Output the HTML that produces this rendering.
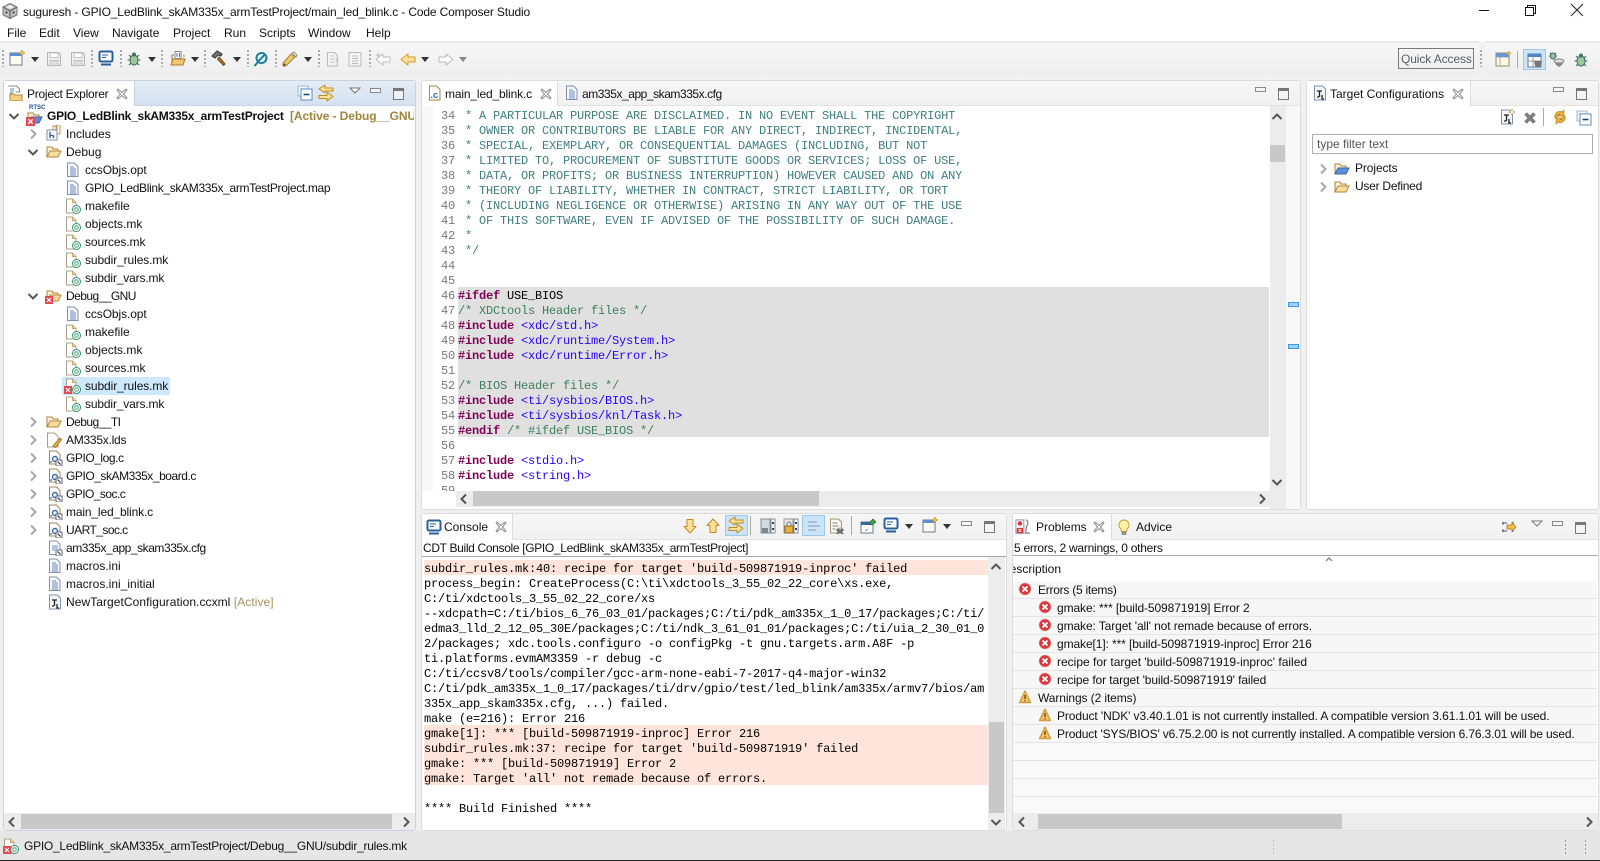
<!DOCTYPE html>
<html><head><meta charset="utf-8"><style>
html,body{margin:0;padding:0;width:1600px;height:861px;overflow:hidden;background:#f0f0f0}
#r{position:relative;width:1600px;height:861px;overflow:hidden;font:12px "Liberation Sans",sans-serif;color:#111}
.a,.t,.i,.m{position:absolute}
.t{white-space:pre;line-height:16px;height:16px}
.i{width:16px;height:16px;overflow:visible}
.m{white-space:pre;font:12px/15px "Liberation Mono",monospace;letter-spacing:-.2px}
.p{position:absolute;background:#fff;border:1px solid #dcdcdc;border-radius:3px;box-sizing:border-box}
.g{position:absolute;width:2px;height:17px;top:50px;background:repeating-linear-gradient(#aaa 0 2px,transparent 2px 4px)}
.mn{position:absolute;width:9px;height:3px;border:1px solid #8a8a8a;background:#fff}
.mx{position:absolute;width:9px;height:8px;border:1px solid #777;border-top-width:3px;background:#fff;box-sizing:content-box}
.d{position:absolute;width:0;height:0;border:4px solid transparent;border-top:5px solid #333;border-bottom:0}
.c{color:#3f7f7f}.k{color:#7f0055;font-weight:bold}.s{color:#2a00ff}.gc{color:#3f7f5f}
.ln{color:#787878;text-align:right;width:24px}
.ht{position:absolute;background:#ececec}
.th{position:absolute;background:#c8c8c8}
.sep{position:absolute;width:1px;background:#aaa}
.r{position:absolute;left:1013px;width:584px;height:17px;background:#f7f7f7;border-bottom:1px solid #e4e4e4}
.q0{letter-spacing:-.1px}.q1{letter-spacing:-.15px}.q2{letter-spacing:-.25px}.q3{letter-spacing:-.33px}.q4{letter-spacing:-.45px}.q5{letter-spacing:-.55px}
</style></head><body><div id="r">
<svg width="0" height="0" style="position:absolute"><defs>
<symbol id="x" viewBox="0 0 12 12"><path d="M2 1l4 3.500L10 1l1 1-3.500 4L11 10l-1 1-4-3.500L2 11l-1-1 3.500-4L1 2z" fill="#fff" stroke="#8c8c8c"/></symbol>
<symbol id="cr" viewBox="0 0 12 12"><path d="M4 1.500L8.500 6 4 10.500" fill="none" stroke="#a8a8a8" stroke-width="2"/></symbol>
<symbol id="cd" viewBox="0 0 12 12"><path d="M1.500 4L6 8.500 10.500 4" fill="none" stroke="#555" stroke-width="2"/></symbol>
<symbol id="tri" viewBox="0 0 12 7"><path d="M1 1h10L6 6z" fill="#fff" stroke="#777"/></symbol>
<symbol id="fo" viewBox="0 0 16 16"><path d="M1 13V3h5l1 2h5v2" fill="#fdf3d6" stroke="#a9813f"/><path d="M1 13l3-6h11l-3 6z" fill="#f7dca0" stroke="#b8843a"/></symbol>
<symbol id="fb" viewBox="0 0 16 16"><path d="M1 13V3h5l1 2h5v2" fill="#fdf3d6" stroke="#a9813f"/><path d="M1 13l3-6h11l-3 6z" fill="#5b8fd8" stroke="#3a64a8"/></symbol>
<symbol id="do" viewBox="0 0 16 16"><path d="M2.500 1h7l3.500 3.500v10h-10.500z" fill="#f6f8fc" stroke="#8291ab"/><path d="M5 5h4M5 7h6M5 9h6M5 11h6M5 13h6" stroke="#6a8ac4"/></symbol>
<symbol id="inc" viewBox="0 0 16 16"><path d="M7 1h4v9H7zM10 0h4v9h-4z" fill="#fdf8e8" stroke="#b49a60"/><rect x="1" y="5" width="10" height="10" fill="#f6f8fc" stroke="#8291ab"/><path d="M4 7v6M4 10.500h2.500a1 1 0 0 1 1 1V13" fill="none" stroke="#2f5d96" stroke-width="1.300"/></symbol>
<symbol id="mk" viewBox="0 0 16 16"><path d="M1.500 1h6l3.500 3.500V15h-9.500z" fill="#fff" stroke="#a8a08a"/><path d="M7.500 1v3.500H11" fill="#f0d890" stroke="#c8a860"/><circle cx="11.500" cy="11.500" r="4" fill="#fff" stroke="#2f9568"/><circle cx="11.500" cy="11.500" r="1.800" fill="none" stroke="#3fa878"/></symbol>
<symbol id="cf" viewBox="0 0 16 16"><path d="M2.500 1h7l3.500 3.500V14H2.500z" fill="#fff" stroke="#a08a50"/><circle cx="8" cy="9" r="2.500" fill="none" stroke="#3a6aa8" stroke-width="1.400"/><circle cx="4" cy="12" r=".9" fill="#3a6aa8"/><rect x="9" y="10" width="6" height="6" fill="#fff" stroke="#667"/><path d="M10.500 11.500l3 3" stroke="#335" stroke-width="1.200"/></symbol>
<symbol id="cc" viewBox="0 0 16 16"><path d="M2.500 1h7l3.500 3.500V15H2.500z" fill="#fff" stroke="#a08a50"/><text x="3.500" y="13" font-size="9" font-family="Liberation Sans" font-weight="bold" fill="#36a">.c</text></symbol>
<symbol id="cg" viewBox="0 0 16 16"><path d="M2.500 1h7l3.500 3.500v10h-10.500z" fill="#fff" stroke="#8291ab"/><path d="M5 6h6M5 8h6M5 10h3" stroke="#6a8ac4"/><rect x="9" y="10" width="6" height="6" fill="#fff" stroke="#667"/><path d="M10.500 11.500l3 3" stroke="#335" stroke-width="1.200"/></symbol>
<symbol id="ld" viewBox="0 0 16 16"><path d="M1.500 1h7l3.500 3.500V15H1.500z" fill="#fff" stroke="#a8a08a"/><path d="M7 14l7-8 1.500 1.500-6 8z" fill="#e8b840" stroke="#a87820"/></symbol>
<symbol id="tc" viewBox="0 0 16 16"><path d="M2.500 1h8l3 3v11h-11z" fill="#f4f6fa" stroke="#8291ab"/><path d="M5 6h5M7.500 6v6M5 12h2M10 10v4h2" stroke="#222" stroke-width="1.300" fill="none"/></symbol>
<symbol id="er" viewBox="0 0 16 16"><circle cx="8" cy="8" r="6" fill="#d5383f"/><circle cx="8" cy="8" r="6" fill="none" stroke="#f2b0a8" stroke-width=".6"/><path d="M5.500 5.500l5 5M10.500 5.500l-5 5" stroke="#fff" stroke-width="1.800"/></symbol>
<symbol id="wa" viewBox="0 0 16 16"><path d="M8 2l5.500 11.500h-11z" fill="#f3c36a" stroke="#d59a3a" stroke-width="1.400" stroke-linejoin="round"/><path d="M8 6v4M8 11.200v1.200" stroke="#6a4a10" stroke-width="1.400"/></symbol>
<symbol id="xm" viewBox="0 0 8 8"><rect width="8" height="8" fill="#de4a50"/><path d="M2 2l4 4M6 2l-4 4" stroke="#fff" stroke-width="1.200"/></symbol>
<symbol id="mo" viewBox="0 0 16 16"><rect x="1.500" y="1.500" width="13" height="10" rx="1.500" fill="#fff" stroke="#2a5f9e" stroke-width="2"/><path d="M4 5h6M4 7.500h4" stroke="#2a5f9e"/><path d="M3 14.500h10" stroke="#2a5f9e" stroke-width="2"/></symbol>
<symbol id="nw" viewBox="0 0 16 16"><rect x="1" y="3" width="12" height="12" fill="#fdfaf0" stroke="#6a7a98"/><path d="M1 3h12v3H1z" fill="#5b8fd0"/><path d="M13 0l1 2 2 1-2 1-1 2-1-2-2-1 2-1z" fill="#f5d04a" stroke="#b89020" stroke-width=".6"/></symbol>
<symbol id="sv" viewBox="0 0 16 16"><path d="M1.500 1.500h11l2 2v11h-13z" fill="#f2f2f2" stroke="#b4b4b4"/><rect x="4" y="2" width="8" height="4.500" fill="#fff" stroke="#c0c0c0"/><rect x="4" y="9.500" width="8" height="5" fill="#ddd" stroke="#c0c0c0"/></symbol>
<symbol id="bg" viewBox="0 0 16 16"><ellipse cx="8" cy="9" rx="4" ry="5" fill="#9cc79a" stroke="#3f6a60"/><circle cx="8" cy="3.500" r="2" fill="#4a7068"/><path d="M3 4l2 2M13 4l-2 2M1.500 9H4M14.500 9H12M3 14l2-2M13 14l-2-2" stroke="#3f6a60" stroke-width="1.100"/></symbol>
<symbol id="op" viewBox="0 0 16 16"><path d="M2 14V5h2M14 5v2" fill="none" stroke="#a9813f"/><path d="M1 15l2-6h12l-2 6z" fill="#f7c66e" stroke="#a87a30"/><path d="M5 1.500h6v7h-6z" fill="#fff" stroke="#888"/><path d="M7.500 3.500c-1 0 0 1.500-1 1.500 1 0 0 1.500 1 1.500M9 3.500c1 0 0 1.500 1 1.500-1 0 0 1.500-1 1.500" fill="none" stroke="#1d5fa8"/></symbol>
<symbol id="hm" viewBox="0 0 16 16"><path d="M8 7l6 7-1.500 1.500L6.500 9z" fill="#b07838" stroke="#704818"/><path d="M1 6l5-5 5 3-1 2-3-1-3 3z" fill="#777" stroke="#333"/></symbol>
<symbol id="se" viewBox="0 0 16 16"><circle cx="8.500" cy="7" r="5" fill="#f4fbfb" stroke="#1c7f9c" stroke-width="2"/><path d="M5.500 10l6-6M5 11l-3.500 4" stroke="#1c7f9c" stroke-width="2"/></symbol>
<symbol id="pn" viewBox="0 0 16 16"><path d="M4 15l-3 0 0-3 8-9 4 3z" fill="#eac66a" stroke="#a98636"/><path d="M1 15l3-1-2-2z" fill="#444"/><path d="M10 2l2-1 3 3-1 2z" fill="#eee" stroke="#998"/></symbol>
<symbol id="pd" viewBox="0 0 16 16"><path d="M2.500 1.500h7l3 3V15h-10z" fill="#f4f4f4" stroke="#bbb"/><path d="M5 5h4M5 8h5M5 11h5" stroke="#c4c4c4"/><path d="M11 6l3 3-3 3z" fill="#ccc"/></symbol>
<symbol id="pl" viewBox="0 0 16 16"><rect x="2" y="1.500" width="12" height="13.500" fill="#f4f4f4" stroke="#bbb"/><path d="M5 5h6M5 7.500h6M5 10h6M5 12.500h6" stroke="#bbb"/></symbol>
<symbol id="al" viewBox="0 0 16 16"><path d="M8 3v3h7v5H8v3L1 8.500z" fill="#fbe29a" stroke="#d49a28" stroke-linejoin="round"/></symbol>
<symbol id="ar" viewBox="0 0 16 16"><path d="M8 3v3H1v5h7v3l7-5.500z" fill="#fff" stroke="#b8b8b8" stroke-linejoin="round"/></symbol>
<symbol id="ag" viewBox="0 0 16 16"><path d="M8 3v3h7v5H8v3L1 8.500z" fill="#fff" stroke="#bbb" stroke-linejoin="round"/><path d="M3 1l1 2 2 1-2 1-1 2-1-2-2-1 2-1z" fill="#ccc"/></symbol>
<symbol id="ln" viewBox="0 0 18 18"><path d="M8 1l-6 4 6 4V7h8V4H8z" fill="#fbe29a" stroke="#c48a20" stroke-linejoin="round"/><path d="M10 8l6 4.500-6 4.500v-2.500H2v-3h8z" fill="#fbe29a" stroke="#c48a20" stroke-linejoin="round"/></symbol>
<symbol id="cl" viewBox="0 0 16 16"><rect x="1" y="1" width="10" height="10" fill="#eef4fa" stroke="#9cb8d4"/><rect x="4" y="4" width="11" height="11" fill="#fff" stroke="#5b8cc0"/><path d="M6.500 9.500h6" stroke="#17476e" stroke-width="1.600"/></symbol>
<symbol id="pe" viewBox="0 0 16 16"><path d="M1.500 1h8l3 3v3h-4" fill="#fdfdfd" stroke="#888"/><path d="M3 4h4M3 6h4M3 8h3" stroke="#6a8ac4"/><path d="M3 16V9h4l1 1h7v6z" fill="#f5cd7e" stroke="#b08a40"/></symbol>
<symbol id="pb" viewBox="0 0 16 16"><rect x="1" y="2" width="13" height="13" fill="#fdf9e8" stroke="#9a8a60"/><path d="M1 6h13M5 6v9" stroke="#aaa"/><path d="M1 2h13v4H1z" fill="#6b98d0"/><path d="M14 0l.8 1.500 1.700.8-1.700.8-.8 1.500-.8-1.500-1.700-.8 1.700-.8z" fill="#f3cc45" stroke="#a88a20" stroke-width=".5"/></symbol>
<symbol id="pv" viewBox="0 0 16 16"><rect x="1" y="2" width="13" height="13" fill="#fff" stroke="#6a7a98"/><path d="M1 2h13v3H1z" fill="#4d85c5"/><path d="M1 9h13M6 5v10" stroke="#999"/><path d="M7 9h8l-1 5-3 2-3-2z" fill="#777"/></symbol>
<symbol id="db" viewBox="0 0 16 16"><path d="M5 8h10l-2 5-3 2-3-2z" fill="#888"/><ellipse cx="10" cy="9" rx="5" ry="2" fill="#ddd" stroke="#888"/><ellipse cx="4" cy="4" rx="2.500" ry="3" fill="#9cc79a" stroke="#3f6a60"/><path d="M1 1l1.500 1.500M7 1L5.500 2.500M0 4h1.500M8 4H6.500" stroke="#3f6a60"/></symbol>
<symbol id="ty" viewBox="0 0 16 16"><path d="M2.500 1h8l3 3v11h-11z" fill="#f4f6fa" stroke="#8291ab"/><path d="M5 6h5M7.500 6v6M5 12h2M10 10v4h2" stroke="#222" stroke-width="1.300" fill="none"/><path d="M13 0l1 2 2 1-2 1-1 2-1-2-2-1 2-1z" fill="#fff" stroke="#bba060" stroke-width=".7"/></symbol>
<symbol id="xx" viewBox="0 0 16 16"><path d="M3.500 3.500l9 9M12.500 3.500l-9 9" stroke="#7d7d7d" stroke-width="3.600"/></symbol>
<symbol id="sy" viewBox="0 0 16 16"><path d="M3 9a5 5 0 0 1 7-6l2-2v6H6l2-2a3 3 0 0 0-3 3z" fill="#eab23a" stroke="#b8801a" stroke-width=".7"/><path d="M13 7a5 5 0 0 1-7 6l-2 2V9h6l-2 2a3 3 0 0 0 3-3z" fill="#eab23a" stroke="#b8801a" stroke-width=".7"/></symbol>
<symbol id="dd" viewBox="0 0 16 16"><path d="M5 1.500h6v7h3l-6 6.500L2 8.500h3z" fill="#fbe29a" stroke="#c48a20" stroke-linejoin="round"/></symbol>
<symbol id="uu" viewBox="0 0 16 16"><path d="M5 14.500h6v-7h3L8 1 2 7.500h3z" fill="#fbe29a" stroke="#c48a20" stroke-linejoin="round"/></symbol>
<symbol id="sl" viewBox="0 0 16 16"><rect x="1" y="1" width="9" height="14" fill="#d4d9e0" stroke="#8a8a8a"/><path d="M11 1h4v14h-4z" fill="#fff" stroke="#7a8aa0"/><rect x="2" y="10" width="6" height="5" fill="#7d8590"/><path d="M13 4v2M13 10v2" stroke="#345" stroke-width="2"/></symbol>
<symbol id="lk" viewBox="0 0 16 16"><rect x="1" y="1" width="9" height="14" fill="#e6e8ec" stroke="#9a9a9a"/><path d="M11 1h4v14h-4z" fill="#fff" stroke="#7a8aa0"/><rect x="2" y="8" width="8" height="7" fill="#eab23a" stroke="#8a6a20"/><path d="M4 8V6a2 2 0 0 1 4 0v2" fill="none" stroke="#777"/><path d="M13 4v2M13 10v2" stroke="#345" stroke-width="2"/></symbol>
<symbol id="wr" viewBox="0 0 16 16"><path d="M2 4h9M2 8h12M2 12h8" stroke="#8a9ab0"/></symbol>
<symbol id="cx" viewBox="0 0 16 16"><path d="M1.500 1h8l3 3v6h-2l-2 5H1.500z" fill="#f8f6ee" stroke="#a59a70"/><path d="M3.500 5h5M3.500 8h6M3.500 11h3" stroke="#7a8aa0"/><path d="M9 10l2 2 2-2 2 2-2 2 2 2h-2.500L11 15l-1.500 1H7l2-2-2-2z" fill="#6a6a6a"/></symbol>
<symbol id="ps" viewBox="0 0 16 16"><rect x="1" y="4" width="12" height="11" fill="#fff" stroke="#6a7a98"/><path d="M1 4h12v3H1z" fill="#2f6ca8"/><path d="M9 5l4-4 3 3-4 3z" fill="#3fa04a" stroke="#1f6a2a" stroke-width=".7"/><path d="M5 13l3-2" stroke="#888"/></symbol>
<symbol id="pr" viewBox="0 0 18 18"><rect x="1" y="1" width="9" height="15" fill="#f5f5fa" stroke="#889"/><circle cx="5.500" cy="5" r="2.500" fill="#d33"/><rect x="2" y="10" width="7" height="6" fill="#d33"/><path d="M4 11.500l3 3M7 11.500l-3 3" stroke="#fff"/><path d="M12 1c3 0 3 6 1 7l-1 8h5" fill="none" stroke="#8a8a96" stroke-width="1.500"/></symbol>
<symbol id="ad" viewBox="0 0 16 16"><path d="M8 1a5 5 0 0 0-3 9l.5 2.500h5L11 10a5 5 0 0 0-3-9z" fill="#fdf0a8" stroke="#c8a030"/><rect x="6" y="13" width="4" height="2.500" fill="#99a" stroke="#667" stroke-width=".5"/></symbol>
<symbol id="ss" viewBox="0 0 16 16"><path d="M3 3v3M3 10v3M13 3v3M13 10v3M2 4h5M2 12h5" stroke="#557" /><path d="M7 6h5V3.500L16 8l-4 4.500V10H7z" fill="#f1c24a" stroke="#a87820" stroke-width=".8"/></symbol>
<symbol id="cb" viewBox="0 0 16 16"><path d="M8 .5l7 3.500v8l-7 3.500L1 12V4z" fill="#bdbdbd" stroke="#777"/><path d="M8 8L1 4M8 8l7-4M8 8v7.500" stroke="#555"/><path d="M4 4l4-2 4 2-4 2z" fill="#eee"/><circle cx="4.500" cy="9.500" r="1" fill="#333"/><circle cx="11.500" cy="9.500" r="1" fill="#333"/></symbol>
</defs></svg>

<!-- title + menu -->
<div class="a" style="left:0;top:0;width:1600px;height:42px;background:#fff"></div>
<svg class="i" style="left:2px;top:3px"><use href="#cb"/></svg>
<span class="t q1" style="left:23px;top:4px">suguresh - GPIO_LedBlink_skAM335x_armTestProject/main_led_blink.c - Code Composer Studio</span>
<div class="a" style="left:1479px;top:10px;width:10px;height:1px;background:#111"></div>
<div class="a" style="left:1527px;top:5px;width:7px;height:7px;border:1px solid #111;background:#fff"></div>
<div class="a" style="left:1525px;top:7px;width:7px;height:7px;border:1px solid #111;background:#fff"></div>
<svg class="i" style="left:1569px;top:2px"><path d="M2 2l12 12M14 2L2 14" stroke="#222" stroke-width="1"/></svg>
<span class="t" style="left:7px;top:25px">File</span><span class="t" style="left:39px;top:25px">Edit</span><span class="t" style="left:73px;top:25px">View</span><span class="t" style="left:112px;top:25px">Navigate</span><span class="t" style="left:173px;top:25px">Project</span><span class="t" style="left:224px;top:25px">Run</span><span class="t" style="left:259px;top:25px">Scripts</span><span class="t" style="left:308px;top:25px">Window</span><span class="t" style="left:366px;top:25px">Help</span>

<!-- toolbar -->
<div class="a" style="left:0;top:41px;width:1479px;height:34px;background:linear-gradient(#f7f7f7,#eeeeee);border-top:2px solid #ebebeb;box-sizing:border-box"></div>
<div class="a" style="left:1485px;top:41px;width:115px;height:34px;background:linear-gradient(#f7f7f7,#eeeeee);border-top:2px solid #ebebeb;box-sizing:border-box"></div>
<div class="g" style="left:2px"></div><div class="g" style="left:91px"></div><div class="g" style="left:120px"></div><div class="g" style="left:161px"></div><div class="g" style="left:204px"></div><div class="g" style="left:247px"></div><div class="g" style="left:275px"></div><div class="g" style="left:318px"></div><div class="g" style="left:369px"></div><div class="g" style="left:1480px"></div>
<svg class="i" style="left:9px;top:50px"><use href="#nw"/></svg><div class="d" style="left:31px;top:57px"></div>
<svg class="i" style="left:46px;top:51px"><use href="#sv"/></svg>
<svg class="i" style="left:70px;top:51px"><use href="#sv"/></svg>
<svg class="i" style="left:98px;top:50px"><use href="#mo"/></svg>
<svg class="i" style="left:126px;top:51px"><use href="#bg"/></svg><div class="d" style="left:148px;top:57px"></div>
<svg class="i" style="left:170px;top:50px"><use href="#op"/></svg><div class="d" style="left:191px;top:57px"></div>
<svg class="i" style="left:211px;top:50px"><use href="#hm"/></svg><div class="d" style="left:233px;top:57px"></div>
<svg class="i" style="left:253px;top:51px"><use href="#se"/></svg>
<svg class="i" style="left:282px;top:51px"><use href="#pn"/></svg><div class="d" style="left:304px;top:57px"></div>
<svg class="i" style="left:325px;top:51px"><use href="#pd"/></svg>
<svg class="i" style="left:347px;top:51px"><use href="#pl"/></svg>
<svg class="i" style="left:375px;top:51px"><use href="#ag"/></svg>
<svg class="i" style="left:400px;top:51px"><use href="#al"/></svg><div class="d" style="left:421px;top:57px"></div>
<svg class="i" style="left:438px;top:51px"><use href="#ar"/></svg><div class="d" style="left:459px;top:57px;border-top-color:#888"></div>
<div class="a" style="left:1398px;top:48px;width:76px;height:21px;border:1px solid #7a7a7a;box-sizing:border-box"></div>
<span class="t q0" style="left:1401px;top:51px;color:#54606c">Quick Access</span>
<svg class="i" style="left:1495px;top:51px"><use href="#pb"/></svg>
<div class="sep" style="left:1517px;top:51px;height:17px"></div>
<div class="a" style="left:1523px;top:49px;width:23px;height:21px;background:#cce4f7;border:1px solid #99c9ef;box-sizing:border-box"></div>
<svg class="i" style="left:1527px;top:52px"><use href="#pv"/></svg>
<svg class="i" style="left:1549px;top:52px"><use href="#db"/></svg>
<svg class="i" style="left:1573px;top:52px"><use href="#bg"/></svg>

<!-- status -->
<div class="a" style="left:0;top:831px;width:1600px;height:30px;background:#e6e6e6"></div>
<div class="a" style="left:0;top:860px;width:1600px;height:1px;background:#222"></div>
<svg class="i" style="left:3px;top:838px"><use href="#mk"/></svg><svg class="a" style="left:3px;top:846px;width:8px;height:8px"><use href="#xm"/></svg>
<span class="t q2" style="left:24px;top:838px">GPIO_LedBlink_skAM335x_armTestProject/Debug__GNU/subdir_rules.mk</span>
<div class="a" style="left:1273px;top:840px;width:1px;height:15px;background:repeating-linear-gradient(#bbb 0 2px,transparent 2px 4px)"></div>
<div class="a" style="left:1565px;top:840px;width:1px;height:15px;background:repeating-linear-gradient(#999 0 2px,transparent 2px 4px)"></div>
<div class="a" style="left:1585px;top:840px;width:1px;height:15px;background:repeating-linear-gradient(#999 0 2px,transparent 2px 4px)"></div>

<!-- LEFT PANEL -->
<div class="p" style="left:3px;top:80px;width:413px;height:751px;border-color:#c8d2e2"></div>
<div class="a" style="left:4px;top:81px;width:411px;height:24px;background:linear-gradient(#e4ebf5,#d6e2f1);border-bottom:1px solid #c8d4e6;border-radius:3px 3px 0 0"></div>
<div class="a" style="left:4px;top:81px;width:130px;height:25px;background:#fff;border-right:1px solid #c8d2e2"></div>
<svg class="i" style="left:7px;top:85px"><use href="#pe"/></svg>
<span class="t q2" style="left:27px;top:86px">Project Explorer</span>
<svg class="a" style="left:116px;top:88px;width:12px;height:12px"><use href="#x"/></svg>
<svg class="i" style="left:297px;top:85px"><use href="#cl"/></svg>
<svg class="a" style="left:317px;top:84px;width:18px;height:18px"><use href="#ln"/></svg>
<svg class="a" style="left:349px;top:87px;width:12px;height:7px"><use href="#tri"/></svg>
<div class="mn" style="left:370px;top:88px;background:#eef2f8"></div><div class="mx" style="left:393px;top:88px;background:#eef2f8"></div>

<svg class="a" style="left:8px;top:110px;width:12px;height:12px"><use href="#cd"/></svg>
<svg class="i" style="left:27px;top:110px"><use href="#fb"/></svg><svg class="a" style="left:26px;top:117px;width:9px;height:9px"><use href="#xm"/></svg>
<span class="a" style="left:29px;top:105px;font:bold 6px 'Liberation Sans';color:#1d4f8c;line-height:7px">RTSC</span>
<span class="t q2" style="left:47px;top:108px;font-weight:bold">GPIO_LedBlink_skAM335x_armTestProject</span>
<div class="a" style="left:290px;top:106px;width:124px;height:20px;overflow:hidden"><span class="t q0" style="left:0;top:2px;color:#a3843f;font-weight:bold">[Active - Debug__GNU]</span></div>

<svg class="a" style="left:27px;top:128px;width:12px;height:12px"><use href="#cr"/></svg><svg class="i" style="left:46px;top:125px"><use href="#inc"/></svg><span class="t" style="left:66px;top:126px">Includes</span>
<svg class="a" style="left:27px;top:146px;width:12px;height:12px"><use href="#cd"/></svg><svg class="i" style="left:46px;top:144px"><use href="#fo"/></svg><span class="t" style="left:66px;top:144px">Debug</span>
<svg class="i" style="left:65px;top:162px"><use href="#do"/></svg><span class="t q0" style="left:85px;top:162px">ccsObjs.opt</span>
<svg class="i" style="left:65px;top:180px"><use href="#do"/></svg><span class="t q3" style="left:85px;top:180px">GPIO_LedBlink_skAM335x_armTestProject.map</span>
<svg class="i" style="left:65px;top:198px"><use href="#mk"/></svg><span class="t" style="left:85px;top:198px">makefile</span>
<svg class="i" style="left:65px;top:216px"><use href="#mk"/></svg><span class="t" style="left:85px;top:216px">objects.mk</span>
<svg class="i" style="left:65px;top:234px"><use href="#mk"/></svg><span class="t q0" style="left:85px;top:234px">sources.mk</span>
<svg class="i" style="left:65px;top:252px"><use href="#mk"/></svg><span class="t q0" style="left:85px;top:252px">subdir_rules.mk</span>
<svg class="i" style="left:65px;top:270px"><use href="#mk"/></svg><span class="t q1" style="left:85px;top:270px">subdir_vars.mk</span>
<svg class="a" style="left:27px;top:290px;width:12px;height:12px"><use href="#cd"/></svg><svg class="i" style="left:46px;top:288px"><use href="#fo"/></svg><svg class="a" style="left:45px;top:296px;width:8px;height:8px"><use href="#xm"/></svg><span class="t q5" style="left:66px;top:288px">Debug__GNU</span>
<svg class="i" style="left:65px;top:306px"><use href="#do"/></svg><span class="t q0" style="left:85px;top:306px">ccsObjs.opt</span>
<svg class="i" style="left:65px;top:324px"><use href="#mk"/></svg><span class="t" style="left:85px;top:324px">makefile</span>
<svg class="i" style="left:65px;top:342px"><use href="#mk"/></svg><span class="t" style="left:85px;top:342px">objects.mk</span>
<svg class="i" style="left:65px;top:360px"><use href="#mk"/></svg><span class="t q0" style="left:85px;top:360px">sources.mk</span>
<div class="a" style="left:62px;top:377px;width:108px;height:18px;background:#cde8ff"></div>
<svg class="i" style="left:65px;top:378px"><use href="#mk"/></svg><svg class="a" style="left:64px;top:386px;width:8px;height:8px"><use href="#xm"/></svg><span class="t q0" style="left:85px;top:378px">subdir_rules.mk</span>
<svg class="i" style="left:65px;top:396px"><use href="#mk"/></svg><span class="t q1" style="left:85px;top:396px">subdir_vars.mk</span>
<svg class="a" style="left:27px;top:416px;width:12px;height:12px"><use href="#cr"/></svg><svg class="i" style="left:46px;top:414px"><use href="#fo"/></svg><span class="t q5" style="left:66px;top:414px">Debug__TI</span>
<svg class="a" style="left:27px;top:434px;width:12px;height:12px"><use href="#cr"/></svg><svg class="i" style="left:46px;top:432px"><use href="#ld"/></svg><span class="t q2" style="left:66px;top:432px">AM335x.lds</span>
<svg class="a" style="left:27px;top:452px;width:12px;height:12px"><use href="#cr"/></svg><svg class="i" style="left:47px;top:450px"><use href="#cf"/></svg><span class="t q4" style="left:66px;top:450px">GPIO_log.c</span>
<svg class="a" style="left:27px;top:470px;width:12px;height:12px"><use href="#cr"/></svg><svg class="i" style="left:47px;top:468px"><use href="#cf"/></svg><span class="t q4" style="left:66px;top:468px">GPIO_skAM335x_board.c</span>
<svg class="a" style="left:27px;top:488px;width:12px;height:12px"><use href="#cr"/></svg><svg class="i" style="left:47px;top:486px"><use href="#cf"/></svg><span class="t q5" style="left:66px;top:486px">GPIO_soc.c</span>
<svg class="a" style="left:27px;top:506px;width:12px;height:12px"><use href="#cr"/></svg><svg class="i" style="left:47px;top:504px"><use href="#cf"/></svg><span class="t q1" style="left:66px;top:504px">main_led_blink.c</span>
<svg class="a" style="left:27px;top:524px;width:12px;height:12px"><use href="#cr"/></svg><svg class="i" style="left:47px;top:522px"><use href="#cf"/></svg><span class="t q5" style="left:66px;top:522px">UART_soc.c</span>
<svg class="i" style="left:47px;top:540px"><use href="#cg"/></svg><span class="t q4" style="left:66px;top:540px">am335x_app_skam335x.cfg</span>
<svg class="i" style="left:47px;top:558px"><use href="#do"/></svg><span class="t" style="left:66px;top:558px">macros.ini</span>
<svg class="i" style="left:47px;top:576px"><use href="#do"/></svg><span class="t" style="left:66px;top:576px">macros.ini_initial</span>
<svg class="i" style="left:47px;top:594px"><use href="#tc"/></svg><span class="t" style="left:66px;top:594px;letter-spacing:.06px">NewTargetConfiguration.ccxml <span style="color:#a3935f">[Active]</span></span>

<div class="ht" style="left:4px;top:813px;width:411px;height:17px"></div>
<div class="th" style="left:21px;top:814px;width:371px;height:15px"></div>
<svg class="a" style="left:6px;top:816px;width:12px;height:12px;transform:scaleX(-1)"><use href="#cr" style="filter:brightness(.5)"/></svg>
<svg class="a" style="left:400px;top:816px;width:12px;height:12px"><use href="#cr" style="filter:brightness(.5)"/></svg>

<!-- EDITOR PANEL -->
<div class="p" style="left:421px;top:80px;width:880px;height:430px"></div>
<div class="a" style="left:422px;top:81px;width:878px;height:24px;background:linear-gradient(#f6f6f6,#f1f1f1);border-bottom:1px solid #e2e2e2"></div>
<div class="a" style="left:422px;top:81px;width:135px;height:25px;background:#fff;border-right:1px solid #dcdcdc"></div>
<svg class="i" style="left:427px;top:85px"><use href="#cc"/></svg>
<span class="t q1" style="left:445px;top:86px">main_led_blink.c</span>
<svg class="a" style="left:540px;top:88px;width:12px;height:12px"><use href="#x"/></svg>
<svg class="i" style="left:564px;top:85px"><use href="#do"/></svg>
<span class="t q4" style="left:582px;top:86px">am335x_app_skam335x.cfg</span>
<div class="mn" style="left:1255px;top:87px;background:#f4f4f4"></div><div class="mx" style="left:1278px;top:88px;background:#f4f4f4"></div>
<div class="a" style="left:422px;top:106px;width:11px;height:385px;background:#f8f8f8"></div>
<div class="a" style="left:458px;top:287px;width:811px;height:150px;background:#e0e0e0"></div>
<div class="a" style="left:422px;top:106px;width:848px;height:385px;overflow:hidden">
<div class="m ln" style="left:9px;top:3px">34
35
36
37
38
39
40
41
42
43
44
45
46
47
48
49
50
51
52
53
54
55
56
57
58
59</div>
<div class="m c" style="left:36px;top:3px"> * A PARTICULAR PURPOSE ARE DISCLAIMED. IN NO EVENT SHALL THE COPYRIGHT
 * OWNER OR CONTRIBUTORS BE LIABLE FOR ANY DIRECT, INDIRECT, INCIDENTAL,
 * SPECIAL, EXEMPLARY, OR CONSEQUENTIAL DAMAGES (INCLUDING, BUT NOT
 * LIMITED TO, PROCUREMENT OF SUBSTITUTE GOODS OR SERVICES; LOSS OF USE,
 * DATA, OR PROFITS; OR BUSINESS INTERRUPTION) HOWEVER CAUSED AND ON ANY
 * THEORY OF LIABILITY, WHETHER IN CONTRACT, STRICT LIABILITY, OR TORT
 * (INCLUDING NEGLIGENCE OR OTHERWISE) ARISING IN ANY WAY OUT OF THE USE
 * OF THIS SOFTWARE, EVEN IF ADVISED OF THE POSSIBILITY OF SUCH DAMAGE.
 *
 */</div>
<div class="m" style="left:36px;top:183px;color:#000"><span class="k">#ifdef</span> USE_BIOS
<span class="gc">/* XDCtools Header files */</span>
<span class="k">#include</span> <span class="s">&lt;xdc/std.h&gt;</span>
<span class="k">#include</span> <span class="s">&lt;xdc/runtime/System.h&gt;</span>
<span class="k">#include</span> <span class="s">&lt;xdc/runtime/Error.h&gt;</span>

<span class="gc">/* BIOS Header files */</span>
<span class="k">#include</span> <span class="s">&lt;ti/sysbios/BIOS.h&gt;</span>
<span class="k">#include</span> <span class="s">&lt;ti/sysbios/knl/Task.h&gt;</span>
<span class="k">#endif</span> <span class="gc">/* #ifdef USE_BIOS */</span>

<span class="k">#include</span> <span class="s">&lt;stdio.h&gt;</span>
<span class="k">#include</span> <span class="s">&lt;string.h&gt;</span></div>
</div>
<div class="ht" style="left:1270px;top:106px;width:16px;height:403px"></div>
<div class="th" style="left:1270px;top:145px;width:15px;height:17px"></div>
<svg class="a" style="left:1271px;top:111px;width:12px;height:12px;transform:rotate(180deg)"><use href="#cd"/></svg>
<svg class="a" style="left:1271px;top:476px;width:12px;height:12px"><use href="#cd"/></svg>
<div class="a" style="left:1286px;top:106px;width:14px;height:403px;background:#f8f8f8"></div>
<div class="a" style="left:1288px;top:302px;width:9px;height:3px;background:#a8d0f5;border:1px solid #3399ff"></div>
<div class="a" style="left:1288px;top:344px;width:9px;height:3px;background:#a8d0f5;border:1px solid #3399ff"></div>
<div class="ht" style="left:456px;top:491px;width:814px;height:16px"></div>
<div class="th" style="left:473px;top:491px;width:346px;height:15px"></div>
<svg class="a" style="left:458px;top:493px;width:12px;height:12px;transform:scaleX(-1)"><use href="#cr" style="filter:brightness(.5)"/></svg>
<svg class="a" style="left:1256px;top:493px;width:12px;height:12px"><use href="#cr" style="filter:brightness(.5)"/></svg>

<!-- RIGHT PANEL -->
<div class="p" style="left:1306px;top:80px;width:293px;height:430px"></div>
<div class="a" style="left:1307px;top:81px;width:291px;height:24px;background:linear-gradient(#f6f6f6,#f1f1f1);border-bottom:1px solid #e2e2e2"></div>
<div class="a" style="left:1307px;top:81px;width:163px;height:25px;background:#fff;border-right:1px solid #dcdcdc"></div>
<svg class="i" style="left:1312px;top:85px"><use href="#tc"/></svg>
<span class="t" style="left:1330px;top:86px">Target Configurations</span>
<svg class="a" style="left:1452px;top:88px;width:12px;height:12px"><use href="#x"/></svg>
<div class="mn" style="left:1553px;top:87px;background:#f4f4f4"></div><div class="mx" style="left:1576px;top:88px;background:#f4f4f4"></div>
<svg class="i" style="left:1499px;top:109px"><use href="#ty"/></svg>
<svg class="i" style="left:1522px;top:110px"><use href="#xx"/></svg>
<div class="sep" style="left:1543px;top:108px;height:18px"></div>
<svg class="i" style="left:1552px;top:109px"><use href="#sy"/></svg>
<svg class="i" style="left:1576px;top:110px"><use href="#cl"/></svg>
<div class="a" style="left:1312px;top:134px;width:281px;height:20px;border:1px solid #aaaab0;box-sizing:border-box"></div>
<span class="t" style="left:1317px;top:136px;color:#555">type filter text</span>
<svg class="a" style="left:1317px;top:163px;width:12px;height:12px"><use href="#cr"/></svg><svg class="i" style="left:1334px;top:161px"><use href="#fb"/></svg><span class="t q0" style="left:1355px;top:160px">Projects</span>
<svg class="a" style="left:1317px;top:181px;width:12px;height:12px"><use href="#cr"/></svg><svg class="i" style="left:1334px;top:179px"><use href="#fo"/></svg><span class="t q2" style="left:1355px;top:178px">User Defined</span>

<!-- CONSOLE -->
<div class="p" style="left:421px;top:513px;width:586px;height:318px"></div>
<div class="a" style="left:422px;top:514px;width:584px;height:25px;background:linear-gradient(#f6f6f6,#f1f1f1);border-bottom:1px solid #e2e2e2"></div>
<div class="a" style="left:422px;top:514px;width:90px;height:26px;background:#fff;border-right:1px solid #dcdcdc"></div>
<svg class="i" style="left:426px;top:519px"><use href="#mo"/></svg>
<span class="t" style="left:444px;top:519px">Console</span>
<svg class="a" style="left:495px;top:521px;width:12px;height:12px"><use href="#x"/></svg>
<svg class="i" style="left:682px;top:518px"><use href="#dd"/></svg>
<svg class="i" style="left:705px;top:518px"><use href="#uu"/></svg>
<div class="a" style="left:725px;top:515px;width:23px;height:21px;background:#cce4f7;border:1px solid #99c9ef;box-sizing:border-box"></div>
<svg class="a" style="left:727px;top:516px;width:18px;height:18px"><use href="#ln"/></svg>
<div class="sep" style="left:750px;top:516px;height:19px"></div>
<svg class="i" style="left:760px;top:518px"><use href="#sl"/></svg>
<svg class="i" style="left:783px;top:518px"><use href="#lk"/></svg>
<div class="a" style="left:802px;top:515px;width:23px;height:21px;background:#cce4f7;border:1px solid #99c9ef;box-sizing:border-box"></div>
<svg class="i" style="left:806px;top:518px"><use href="#wr"/></svg>
<svg class="i" style="left:829px;top:518px"><use href="#cx"/></svg>
<div class="sep" style="left:851px;top:516px;height:19px"></div>
<svg class="i" style="left:860px;top:518px"><use href="#ps"/></svg>
<svg class="i" style="left:883px;top:517px"><use href="#mo"/></svg><div class="d" style="left:905px;top:524px"></div>
<svg class="i" style="left:922px;top:517px"><use href="#nw"/></svg><div class="d" style="left:943px;top:524px"></div>
<div class="mn" style="left:961px;top:521px;background:#f4f4f4"></div><div class="mx" style="left:984px;top:521px;background:#f4f4f4"></div>
<span class="t q3" style="left:423px;top:540px">CDT Build Console [GPIO_LedBlink_skAM335x_armTestProject]</span>
<div class="a" style="left:422px;top:556px;width:584px;height:1px;background:#a8a8a8"></div>
<div class="a" style="left:424px;top:560px;width:564px;height:15px;background:#ffe4dc"></div>
<div class="a" style="left:424px;top:725px;width:564px;height:60px;background:#ffe4dc"></div>
<div class="m" style="left:424px;top:562px;color:#000">subdir_rules.mk:40: recipe for target 'build-509871919-inproc' failed
process_begin: CreateProcess(C:\ti\xdctools_3_55_02_22_core\xs.exe,
C:/ti/xdctools_3_55_02_22_core/xs
--xdcpath=C:/ti/bios_6_76_03_01/packages;C:/ti/pdk_am335x_1_0_17/packages;C:/ti/
edma3_lld_2_12_05_30E/packages;C:/ti/ndk_3_61_01_01/packages;C:/ti/uia_2_30_01_0
2/packages; xdc.tools.configuro -o configPkg -t gnu.targets.arm.A8F -p
ti.platforms.evmAM3359 -r debug -c
C:/ti/ccsv8/tools/compiler/gcc-arm-none-eabi-7-2017-q4-major-win32
C:/ti/pdk_am335x_1_0_17/packages/ti/drv/gpio/test/led_blink/am335x/armv7/bios/am
335x_app_skam335x.cfg, ...) failed.
make (e=216): Error 216
gmake[1]: *** [build-509871919-inproc] Error 216
subdir_rules.mk:37: recipe for target 'build-509871919' failed
gmake: *** [build-509871919] Error 2
gmake: Target 'all' not remade because of errors.

**** Build Finished ****</div>
<div class="ht" style="left:988px;top:557px;width:17px;height:273px"></div>
<div class="th" style="left:989px;top:722px;width:15px;height:91px"></div>
<svg class="a" style="left:990px;top:561px;width:12px;height:12px;transform:rotate(180deg)"><use href="#cd"/></svg>
<svg class="a" style="left:990px;top:816px;width:12px;height:12px"><use href="#cd"/></svg>

<!-- PROBLEMS -->
<div class="p" style="left:1012px;top:513px;width:587px;height:318px"></div>
<div class="a" style="left:1013px;top:514px;width:585px;height:25px;background:linear-gradient(#f6f6f6,#f1f1f1);border-bottom:1px solid #e2e2e2"></div>
<div class="a" style="left:1013px;top:514px;width:98px;height:26px;background:#fff;border-right:1px solid #dcdcdc"></div>
<svg class="i" style="left:1015px;top:519px"><use href="#pr"/></svg>
<span class="t" style="left:1036px;top:519px">Problems</span>
<svg class="a" style="left:1093px;top:521px;width:12px;height:12px"><use href="#x"/></svg>
<svg class="i" style="left:1116px;top:519px"><use href="#ad"/></svg>
<span class="t" style="left:1136px;top:519px">Advice</span>
<svg class="i" style="left:1500px;top:519px"><use href="#ss"/></svg>
<svg class="a" style="left:1531px;top:520px;width:12px;height:7px"><use href="#tri"/></svg>
<div class="mn" style="left:1552px;top:521px;background:#f4f4f4"></div><div class="mx" style="left:1575px;top:522px;background:#f4f4f4"></div>
<span class="t q2" style="left:1014px;top:540px">5 errors, 2 warnings, 0 others</span>
<div class="a" style="left:1013px;top:555px;width:585px;height:1px;background:#a8a8a8"></div>
<svg class="a" style="left:1325px;top:556px;width:8px;height:6px"><path d="M1 5l3-3 3 3" fill="none" stroke="#777" stroke-width="1.200"/></svg>
<div class="a" style="left:1013px;top:560px;width:60px;height:18px;overflow:hidden"><span class="t" style="left:-12px;top:1px">Description</span></div>
<div class="r" style="top:581px"></div><div class="r" style="top:599px"></div><div class="r" style="top:617px"></div><div class="r" style="top:635px"></div><div class="r" style="top:653px"></div><div class="r" style="top:671px"></div><div class="r" style="top:689px"></div><div class="r" style="top:707px"></div><div class="r" style="top:725px"></div><div class="r" style="top:743px;background:#f9f9f9"></div><div class="r" style="top:761px;background:#f9f9f9"></div><div class="r" style="top:779px;background:#f9f9f9"></div><div class="r" style="top:797px;background:#f9f9f9;height:16px;border:0"></div>
<svg class="i" style="left:1017px;top:581px"><use href="#er"/></svg><span class="t q2" style="left:1038px;top:582px">Errors (5 items)</span>
<svg class="i" style="left:1037px;top:599px"><use href="#er"/></svg><span class="t q0" style="left:1057px;top:600px">gmake: *** [build-509871919] Error 2</span>
<svg class="i" style="left:1037px;top:617px"><use href="#er"/></svg><span class="t q0" style="left:1057px;top:618px">gmake: Target 'all' not remade because of errors.</span>
<svg class="i" style="left:1037px;top:635px"><use href="#er"/></svg><span class="t q0" style="left:1057px;top:636px">gmake[1]: *** [build-509871919-inproc] Error 216</span>
<svg class="i" style="left:1037px;top:653px"><use href="#er"/></svg><span class="t" style="left:1057px;top:654px">recipe for target 'build-509871919-inproc' failed</span>
<svg class="i" style="left:1037px;top:671px"><use href="#er"/></svg><span class="t q0" style="left:1057px;top:672px">recipe for target 'build-509871919' failed</span>
<svg class="i" style="left:1017px;top:689px"><use href="#wa"/></svg><span class="t q0" style="left:1038px;top:690px">Warnings (2 items)</span>
<svg class="i" style="left:1037px;top:707px"><use href="#wa"/></svg><span class="t q0" style="left:1057px;top:708px">Product 'NDK' v3.40.1.01 is not currently installed. A compatible version 3.61.1.01 will be used.</span>
<svg class="i" style="left:1037px;top:725px"><use href="#wa"/></svg><span class="t q1" style="left:1057px;top:726px">Product 'SYS/BIOS' v6.75.2.00 is not currently installed. A compatible version 6.76.3.01 will be used.</span>
<div class="ht" style="left:1013px;top:813px;width:585px;height:17px"></div>
<div class="th" style="left:1038px;top:814px;width:304px;height:15px"></div>
<svg class="a" style="left:1016px;top:816px;width:12px;height:12px;transform:scaleX(-1)"><use href="#cr" style="filter:brightness(.5)"/></svg>
<svg class="a" style="left:1583px;top:816px;width:12px;height:12px"><use href="#cr" style="filter:brightness(.5)"/></svg>
</div></body></html>
